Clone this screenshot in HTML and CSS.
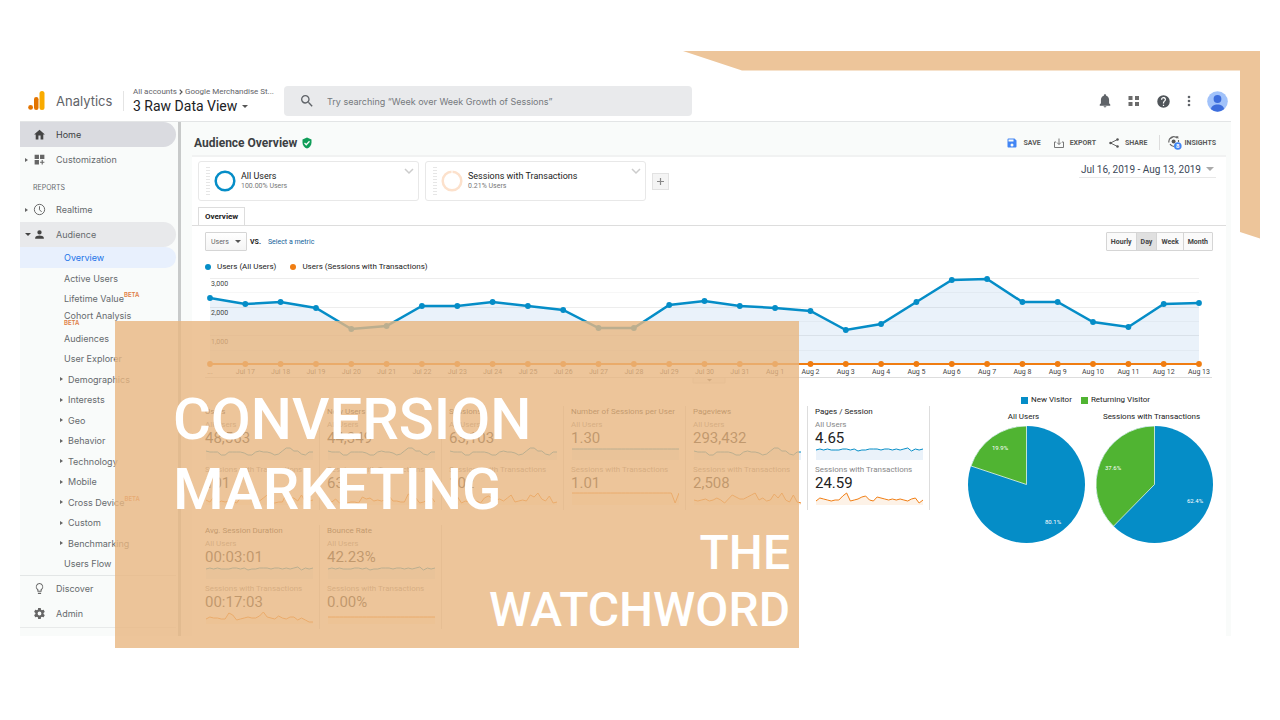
FILE: index.html
```html
<!DOCTYPE html>
<html lang="en">
<head>
<meta charset="utf-8">
<title>Conversion Marketing the Watchword</title>
<link rel="stylesheet" href="styles.css">
</head>
<body>
<div class="stage">
  <div class="dash">
    <header class="top">
      <div class="brand">
        <svg width="18" height="20" viewBox="0 0 18 20"><rect x="11.500" y="0" width="5" height="19" rx="2.500" fill="#f9ab00"/><rect x="6" y="6" width="4.500" height="13" rx="2.200" fill="#e37400"/><circle cx="2.600" cy="16.400" r="2.400" fill="#e37400"/></svg>
        <span>Analytics</span>
      </div>
      <div class="account">
        <div class="crumbs">All accounts <svg width="4" height="6" viewBox="0 0 4 6"><path d="M.7.7 3 3 .7 5.300" fill="none" stroke="#555" stroke-width="1.200"/></svg> Google Merchandise St...</div>
        <div class="view">3 Raw Data View <i class="caret"></i></div>
      </div>
      <label class="search">
        <svg width="16" height="16" viewBox="0 0 24 24" fill="#5f6368"><path d="M15.500 14h-.79l-.28-.27A6.470 6.470 0 0 0 16 9.500 6.500 6.500 0 1 0 9.500 16c1.610 0 3.090-.59 4.230-1.570l.27.28v.79l5 4.990L20.490 19l-4.990-5zm-6 0C7.010 14 5 11.990 5 9.500S7.010 5 9.500 5 14 7.010 14 9.500 11.990 14 9.500 14z"/></svg>
        <input type="text" aria-label="Search" placeholder="Try searching “Week over Week Growth of Sessions”">
      </label>
      <div class="tools">
        <button aria-label="Notifications"><svg width="14" height="14" viewBox="0 0 24 24" fill="#5f6368"><path d="M12 23c1.400 0 2.400-.9 2.400-2H9.600c0 1.100 1 2 2.400 2zm7-7v-6c0-3.500-1.900-6.200-5-7V2c0-1-.9-1.700-2-1.700S10 1 10 2v1C6.900 3.800 5 6.500 5 10v6l-2 2v2h18v-2z"/></svg></button>
        <button aria-label="Apps"><svg width="12" height="12" viewBox="0 0 12 12" fill="#6b6b6b"><path d="M.5 1h4v4h-4zM7 1h4v4H7zM.5 7h4v4h-4zM7 7h4v4H7z"/></svg></button>
        <button aria-label="Help"><svg width="15" height="15" viewBox="0 0 24 24" fill="#50555a"><path d="M12 2a10 10 0 1 0 0 20 10 10 0 0 0 0-20zm1 17h-2v-2h2zm2.070-7.750-.9.920C13.450 12.900 13 13.500 13 15h-2v-.5c0-1.100.45-2.100 1.170-2.830l1.240-1.260A2 2 0 1 0 10 9H8a4 4 0 1 1 7.070 2.250z"/></svg></button>
        <button aria-label="More"><svg width="4" height="12" viewBox="0 0 4 12" fill="#5f6368"><circle cx="2" cy="2" r="1.300"/><circle cx="2" cy="6" r="1.300"/><circle cx="2" cy="10" r="1.300"/></svg></button>
        <button aria-label="Account"><svg width="21" height="21" viewBox="0 0 21 21"><circle cx="10.500" cy="10.500" r="10.300" fill="#a1c2fa"/><circle cx="10.500" cy="8" r="3.900" fill="#3d6ddc"/><path d="M4 18.300c0-3 3-4.900 6.500-4.900s6.500 1.900 6.500 4.900a10 10 0 0 1-13 0z" fill="#3d6ddc"/></svg></button>
      </div>
    </header>

    <div class="body">
      <nav class="side">
        <a class="row home" href="#"><i></i><svg class="ico" viewBox="0 0 24 24"><path d="M10 21v-7h4v7h5v-9h3L12 3 2 12h3v9z"/></svg>Home</a>
        <a class="row" href="#"><i class="tri"></i><svg class="ico" viewBox="0 0 24 24"><path d="M3 3h8v8H3zM13 3h8v8h-8zM3 13h8v8H3zM16 13h2v3h3v2h-3v3h-2v-3h-3v-2h3z"/></svg>Customization</a>
        <div class="group">REPORTS</div>
        <a class="row" href="#"><i class="tri"></i><svg class="ico" viewBox="0 0 24 24"><circle cx="12" cy="12" r="9.500" fill="none" stroke="#666" stroke-width="1.800"/><path d="M12 6v6.500l4 4" fill="none" stroke="#666" stroke-width="1.800"/></svg>Realtime</a>
        <a class="row open" href="#"><i class="tri down"></i><svg class="ico" viewBox="0 0 24 24"><path d="M12 12a4 4 0 1 0 0-8 4 4 0 0 0 0 8zm0 2c-3 0-8 1.300-8 4v2h16v-2c0-2.700-5-4-8-4z"/></svg>Audience</a>
        <div class="sub first">
          <a class="on" href="#">Overview</a>
          <a href="#">Active Users</a>
          <a href="#">Lifetime Value<sup>BETA</sup></a>
          <a class="stack" href="#">Cohort Analysis<small>BETA</small></a>
        </div>
        <div class="sub rest">
          <a href="#">Audiences</a>
          <a href="#">User Explorer</a>
          <a href="#"><i class="tri"></i>Demographics</a>
          <a href="#"><i class="tri"></i>Interests</a>
          <a href="#"><i class="tri"></i>Geo</a>
          <a href="#"><i class="tri"></i>Behavior</a>
          <a href="#"><i class="tri"></i>Technology</a>
          <a href="#"><i class="tri"></i>Mobile</a>
          <a href="#"><i class="tri"></i>Cross Device<sup>BETA</sup></a>
          <a href="#"><i class="tri"></i>Custom</a>
          <a href="#"><i class="tri"></i>Benchmarking</a>
          <a href="#">Users Flow</a>
        </div>
        <div class="foot">
          <a class="row" href="#"><i></i><svg class="ico" viewBox="0 0 24 24"><path d="M9 21c0 .6.4 1 1 1h4c.6 0 1-.4 1-1v-1H9zm3-19a7 7 0 0 0-4 12.700V17c0 .6.4 1 1 1h6c.6 0 1-.4 1-1v-2.300A7 7 0 0 0 12 2zm2.800 11.100-.8.600V16h-4v-2.300l-.8-.6a5 5 0 1 1 5.600 0z"/></svg>Discover</a>
          <a class="row" href="#"><i></i><svg class="ico" viewBox="0 0 24 24"><path d="M19.400 13c.1-.6.1-1.300 0-2l2.100-1.600c.2-.1.200-.4.100-.6l-2-3.500c-.1-.2-.4-.3-.6-.2l-2.500 1a7 7 0 0 0-1.700-1l-.4-2.600c0-.3-.2-.5-.5-.5h-4c-.3 0-.5.200-.5.500L9 5.100a7 7 0 0 0-1.700 1l-2.500-1c-.2-.1-.5 0-.6.200l-2 3.500c-.1.200 0 .5.100.6L4.500 11a8 8 0 0 0 0 2l-2.200 1.600c-.1.100-.2.400-.1.600l2 3.500c.1.200.4.300.6.200l2.500-1a7 7 0 0 0 1.700 1l.4 2.600c0 .3.300.5.500.5h4c.3 0 .5-.2.500-.5l.4-2.600a7 7 0 0 0 1.700-1l2.500 1c.2.100.5 0 .6-.2l2-3.500c.1-.2.100-.5-.1-.6zM12 15.500a3.500 3.500 0 1 1 0-7 3.500 3.500 0 0 1 0 7z"/></svg>Admin</a>
        </div>
      </nav>

      <main class="main">
        <div class="titlebar">
          <h1>Audience Overview</h1>
          <svg width="12" height="12" viewBox="0 0 24 24"><path d="M12 1 3 5v6c0 5.500 3.800 10.700 9 12 5.200-1.300 9-6.500 9-12V5z" fill="#0f9d58"/><path d="m7 12 3.500 3.500L17 8.500" fill="none" stroke="#fff" stroke-width="2.500"/></svg>
          <div class="actions">
            <button><svg width="12" height="12" viewBox="0 0 24 24" fill="#4285f4"><path d="M17 3H5a2 2 0 0 0-2 2v14c0 1.100.9 2 2 2h14a2 2 0 0 0 2-2V7zm-5 16a3 3 0 1 1 0-6 3 3 0 0 1 0 6zm3-10H5V5h10z"/></svg>SAVE</button>
            <button><svg width="12" height="12" viewBox="0 0 24 24" fill="none" stroke="#777" stroke-width="2"><path d="M6 10H3v11h18V10h-3M12 3v12M8 11l4 4 4-4"/></svg>EXPORT</button>
            <button><svg width="12" height="12" viewBox="0 0 24 24" fill="#555"><path d="M19 5 5 12l14 7" fill="none" stroke="#555" stroke-width="1.800"/><circle cx="19" cy="5" r="2.500"/><circle cx="5" cy="12" r="2.500"/><circle cx="19" cy="19" r="2.500"/></svg>SHARE</button>
            <button class="insights"><svg width="14" height="15" viewBox="0 0 14 15"><path d="M1 7.500A4.800 4.800 0 0 1 9 3M10.500 5v2M1.500 4 5 2M2 9a4.800 4.800 0 0 0 4 2.500" fill="none" stroke="#666" stroke-width="1.200"/><path d="M7.500 1.200h2.800V4z" fill="#666"/><circle cx="5.600" cy="6.500" r="2" fill="#555"/><circle cx="9.800" cy="11" r="3.800" fill="#4285f4"/><text x="9.800" y="13.200" font-size="6" font-weight="700" text-anchor="middle" fill="#fff">8</text></svg>INSIGHTS</button>
          </div>
        </div>

        <div class="panel">
          <div class="segments">
            <div class="seg"><i class="grip"></i><svg width="22" height="22" viewBox="0 0 22 22"><circle cx="11" cy="11" r="9.300" fill="none" stroke="#058dc7" stroke-width="2.500"/></svg><div><b>All Users</b><span>100.00% Users</span></div><svg class="chev" width="10" height="7" viewBox="0 0 10 7"><path d="m1 1 4 4 4-4" fill="none" stroke="#ccc" stroke-width="1.500"/></svg></div>
            <div class="seg"><i class="grip"></i><svg width="22" height="22" viewBox="0 0 22 22"><circle cx="11" cy="11" r="9.300" fill="none" stroke="#fce1cc" stroke-width="2.500"/><path d="M11 0v4" stroke="#fff"/></svg><div><b>Sessions with Transactions</b><span>0.21% Users</span></div><svg class="chev" width="10" height="7" viewBox="0 0 10 7"><path d="m1 1 4 4 4-4" fill="none" stroke="#ccc" stroke-width="1.500"/></svg></div>
            <button class="plus" aria-label="Add segment"><svg width="7" height="7" viewBox="0 0 7 7"><path d="M3.500 0v7M0 3.500h7" stroke="#888" stroke-width="1.200"/></svg></button>
            <button class="dates">Jul 16, 2019 - Aug 13, 2019 <i class="caret"></i></button>
          </div>
          <div class="tabs"><button>Overview</button></div>
          <div class="controls">
            <span class="pick"><select aria-label="Metric"><option>Users</option></select></span>
            <b>VS.</b>
            <a href="#">Select a metric</a>
            <div class="gran"><button>Hourly</button><button class="on">Day</button><button>Week</button><button>Month</button></div>
          </div>
          <div class="legend"><i class="dot"></i>Users (All Users)<i class="dot or"></i>Users (Sessions with Transactions)</div>
          <svg class="chart" id="chart" viewBox="0 0 1008 110"></svg>
          <div class="lower">
            <div class="metrics" id="metrics"></div>
            <section class="pies">
              <div class="keys"><i></i>New Visitor<i class="gr"></i>Returning Visitor</div>
              <figure><figcaption>All Users</figcaption>
                <svg viewBox="0 0 117 117"><circle cx="58.500" cy="58.500" r="58.500" fill="#058dc7"/><path d="M58.500 58.500V0A58.500 58.500 0 0 0 3 40z" fill="#50b432" stroke="#fff" stroke-width=".7"/><text x="32" y="24">19.9%</text><text x="85" y="98">80.1%</text></svg></figure>
              <figure><figcaption>Sessions with Transactions</figcaption>
                <svg viewBox="0 0 117 117"><circle cx="58.500" cy="58.500" r="58.500" fill="#058dc7"/><path d="M58.500 58.500V0A58.500 58.500 0 0 0 17.500 100.200z" fill="#50b432" stroke="#fff" stroke-width=".7"/><text x="17" y="44">37.6%</text><text x="99" y="77">62.4%</text></svg></figure>
            </section>
          </div>
        </div>
      </main>
    </div>
  </div>

  <svg class="frame" width="577" height="188" viewBox="0 0 577 188"><path d="M0 0h577v187.500l-20-6.500V19.500H59z" fill="#edc59a"/></svg>
  <div class="banner">
    <p class="big">CONVERSION<br>MARKETING</p>
    <p class="small">THE<br>WATCHWORD</p>
  </div>
</div>
<script src="main.js"></script>
</body>
</html>
```
FILE: styles.css
```css
* { box-sizing: border-box; }
body { margin: 0; background: #fff; font-family: Roboto, "Liberation Sans", sans-serif; font-size: 9px; color: #222; }
button { font: inherit; color: inherit; border: 0; padding: 0; background: none; display: inline-flex; align-items: center; }
a { color: inherit; text-decoration: none; }
svg { display: block; flex: none; }
.stage { position: relative; padding: 82px 49px 72px 20px; }

.top { display: flex; align-items: center; height: 40px; padding-bottom: 1px; border-bottom: 1px solid #e3e5e6; font-family: Inter, Roboto, sans-serif; }
.brand { display: flex; align-items: center; gap: 10px; width: 104px; height: 20px; padding-left: 8px; border-right: 1px solid #e4e4e4; font-size: 13px; color: #5f6368; }
.account { width: 160px; padding-left: 9px; }
.crumbs { display: flex; align-items: center; gap: 2px; font-family: Roboto, sans-serif; font-size: 8px; line-height: 10px; color: #5f6368; white-space: nowrap; }
.view { display: flex; align-items: center; gap: 5px; font-family: Roboto, sans-serif; font-size: 14px; line-height: 18px; color: #202124; }
.caret { border: 3px solid transparent; border-top-color: #555; border-bottom: 0; }
.search { display: flex; align-items: center; gap: 12px; width: 408px; height: 30px; padding-left: 15px; background: #e9eaec; border-radius: 4px; }
.search input { flex: 1; border: 0; padding: 0; background: none; font: 9px Inter, sans-serif; }
.search input::placeholder { color: #75797d; opacity: 1; }
.tools { display: flex; align-items: center; gap: 16px; margin-left: auto; padding-right: 3px; }

.body { display: flex; background: #f9fbfa; }
.side { width: 161px; padding-right: 2px; border-right: 3px solid #c8caca; font-family: Inter, Roboto, sans-serif; color: #666a6d; }
.row { display: flex; align-items: center; height: 25px; padding-left: 5px; border-radius: 0 13px 13px 0; }
.row > i { width: 8px; }
.ico { width: 13px; height: 13px; margin: 0 10px 0 0; fill: #666; }
.home { background: #dadbe0; color: #3c4043; }
.home .ico, .open .ico { fill: #444; }
.open { background: #e8e9eb; }
.tri::before { content: ""; display: block; width: 0; border: 2px solid transparent; border-left: 3px solid #666; border-right: 0; }
.tri.down::before { border: 3px solid transparent; border-top-color: #444; border-bottom: 0; }
.group { padding: 10px 0 4px 13px; font-size: 7px; line-height: 11px; }
.sub { display: flex; flex-direction: column; }
.sub a { display: flex; align-items: center; flex: 1; padding-left: 44px; }
.sub .tri { width: 8px; margin-left: -4px; }
.sub sup, .sub small { font-size: 6px; line-height: 7px; font-weight: 600; color: #e07b44; }
.sub sup { align-self: flex-start; margin-top: 3px; }
.first a { flex: none; height: 20px; }
.first .on { height: 21px; background: #e8f0fd; color: #1a73e8; border-radius: 0 11px 11px 0; }
.first .stack { display: block; line-height: 11px; padding-top: 2px; }
.stack small { display: block; margin-top: -2px; }
.rest { min-height: 246px; }
.foot { margin: 1px 0 8px; border-top: 1px solid #e3e6e6; border-bottom: 1px solid #e8eaea; padding-bottom: 1px; }

.main { flex: 1; min-width: 0; padding: 0 5px 0 11px; }
.titlebar { display: flex; align-items: center; gap: 4px; height: 33px; padding: 8px 10px 0 2px; }
h1 { margin: 0; font-size: 12px; font-weight: 700; color: #3c4043; }
.actions { display: flex; gap: 12px; margin-left: auto; font-size: 7px; font-weight: 700; color: #5b5b5b; }
.actions button { gap: 5px; }
.insights { border-left: 1px solid #ddd; padding-left: 8px; }
.insights svg { margin-right: -3px; }
.panel { background: #fff; border-top: 2px solid #f1f2f2; min-height: 481px; }
.segments { display: flex; gap: 6px; padding: 4px 10px 0 6px; }
.seg { display: flex; align-items: center; width: 221px; height: 40px; padding: 0 4px 0 7px; border: 1px solid #e8e8e8; border-radius: 3px; }
.grip { width: 4px; height: 28px; margin-right: 4px; background: repeating-linear-gradient(#e6e6e6 0 1px, #fff 1px 3px); }
.seg div { margin-left: 5px; }
.seg b, .seg span { display: block; line-height: 10px; }
.seg b { font-weight: 400; font-size: 9px; }
.seg span { font-size: 7px; color: #777; }
.chev { align-self: flex-start; margin: 6px 0 0 auto; }
.plus { align-self: center; justify-content: center; width: 17px; height: 17px; background: #f4f4f4; border: 1px solid #e2e2e2; }
.dates { align-self: flex-start; gap: 5px; height: 17px; margin-left: auto; padding: 0 2px; border-bottom: 1px solid #e8e8e8; font-size: 10px; color: #3c4858; }
.dates .caret { border-width: 4px 4px 0; border-top-color: #aaa; }
.tabs { display: flex; height: 25px; padding: 6px 0 0 6px; border-bottom: 1px solid #ddd; }
.tabs button { height: 18px; padding: 0 6px; background: #fff; border: 1px solid #ddd; border-bottom: 0; font-size: 8px; font-weight: 700; }
.controls { display: flex; align-items: center; padding: 6px 13px 0; font-size: 7px; }
.controls > b { margin: 0 7px 0 3px; }
.controls > a { color: #15649b; }
.pick { position: relative; }
.pick::after { content: ""; position: absolute; right: 6px; top: 8px; border: 3px solid transparent; border-top-color: #555; border-bottom: 0; }
select { appearance: none; width: 42px; height: 19px; padding: 0 5px; border: 1px solid #d5d5d5; border-radius: 1px; background: linear-gradient(#fff, #f5f5f5); font: 7px Roboto, sans-serif; color: #666; }
.gran { display: flex; height: 19px; margin-left: auto; border: 1px solid #d5d5d5; border-radius: 1px; background: #fafafa; font-weight: 700; color: #444; }
.gran button { padding: 0 4px; }
.gran button + button { border-left: 1px solid #d5d5d5; }
.gran .on { background: #e0e0e0; }
.legend { display: flex; align-items: center; padding: 10px 13px 0; font-size: 8px; line-height: 12px; }
.dot { width: 6px; height: 6px; margin-right: 6px; border-radius: 3px; background: #058dc7; }
.dot.or { margin-left: 14px; background: #f07d12; }
.chart { width: auto; margin: 2px 13px 0; font-size: 7px; fill: #444; }
.lower { display: flex; padding: 21px 13px 0 6px; }
.metrics { display: grid; flex: 1; min-width: 0; grid-template-columns: repeat(6, minmax(0, 1fr)); row-gap: 15px; align-content: start; }
.metric { padding: 0 6px 2px 7px; border-right: 1px solid #ddd; white-space: nowrap; }
.metric h2 { margin: 0; font-size: 8px; line-height: 12px; font-weight: 400; }
.metric p { margin: 0; font-size: 8px; line-height: 13px; color: #888; }
.metric strong { display: block; font-size: 15px; line-height: 14px; font-weight: 400; }
.metric svg { width: 100%; height: 18px; padding: 2px 0 2px 1px; }
.pies { display: grid; grid-template-columns: 117px 117px; gap: 0 11px; flex: none; width: 283px; padding-left: 38px; align-content: start; margin-top: -13px; font-size: 8px; text-align: center; }
.keys { grid-column: 1 / 3; display: flex; align-items: center; justify-content: center; line-height: 14px; margin-right: 10px; }
.keys i { width: 7px; height: 7px; margin-right: 3px; background: #058dc7; }
.keys .gr { margin-left: 9px; background: #50b432; }
figure { margin: 0; }
figcaption { line-height: 19px; white-space: nowrap; }
figure + figure figcaption { padding-right: 6px; }
figure:nth-of-type(1) figcaption { padding-right: 6px; }
figure svg { width: 100%; }
figure text { font-size: 6px; fill: #fff; text-anchor: middle; }

.frame { position: absolute; top: 51px; right: 20px; }
.banner { position: absolute; left: 115px; top: 321px; width: 684px; padding: 63px 9px 10px 58px; background: rgba(232, 182, 129, .8); color: #fff; font-weight: 500; }
.banner p { margin: 0; }
.big { font-size: 58px; line-height: 70px; }
.small { font-size: 48px; line-height: 57px; text-align: right; }
```
FILE: main.js
```js
const BLUE = '#058dc7', ORANGE = '#f07d12', FILL = '#2f7fd0';

// Daily users, Jul 16 to Aug 13, as heights over the baseline.
const users = [66, 60, 62, 56, 35, 38, 58, 58, 62, 58, 54, 36, 36, 59, 63, 58, 56, 53, 34, 40, 62, 84, 85, 62, 62, 42, 37, 60, 61];
const base = 89, x0 = 5, step = 989 / 28;
const px = i => (x0 + i * step).toFixed(1);
let out = '';
[3, 17, 32, 46, 60, 75].forEach((y, i) => { out += `<path d="M5 ${y}.5H994" stroke="${i % 2 ? '#f7f7f7' : '#ededed'}"/>`; });
const line = users.map((v, i) => `${px(i)},${base - v}`).join(' ');
out += `<polygon points="5,${base} ${line} 994,${base}" fill="${FILL}" fill-opacity=".1"/>`;
out += `<polyline points="${line}" fill="none" stroke="${BLUE}" stroke-width="2.5"/>`;
out += `<path d="M5 ${base}H994" stroke="${ORANGE}" stroke-width="2"/>`;
users.forEach((v, i) => {
  const label = i === 0 ? '...' : i < 16 ? `Jul ${16 + i}` : `Aug ${i - 15}`;
  out += `<circle cx="${px(i)}" cy="${base - v}" r="2.9" fill="${BLUE}"/><circle cx="${px(i)}" cy="${base}" r="2.9" fill="${ORANGE}"/>`;
  out += `<text x="${px(i)}" y="99" text-anchor="middle">${label}</text>`;
});
['3,000', '2,000', '1,000'].forEach((t, i) => { out += `<text x="6" y="${11 + i * 29}">${t}</text>`; });
out += '<path d="M0 102.500H1007" stroke="#ddd"/><path d="M488 103v5h32v-5" fill="#f5f5f5" stroke="#ddd"/><path d="M502 104h5l-2.500 2.500z" fill="#777"/>';
document.getElementById('chart').innerHTML = out;

const wave = [8, 7, 7, 7, 4, 4, 7, 7, 7, 7, 6, 4, 4, 7, 8, 7, 7, 6, 4, 5, 8, 11, 11, 8, 8, 5, 4, 7, 7];
const jag = [4, 2, 7, 1, 3, 2, 3, 3, 1, 6, 8, 6, 4, 5, 3, 6, 9, 2, 1, 2, 2, 10, 6, 6, 3, 9, 2, 3, 4];
const flat = [9, 10, 9, 10, 9, 9, 9, 10, 10, 9, 10, 8, 9, 9, 10, 10, 10, 9, 10, 10, 9, 10, 9, 10, 11, 8, 10, 9, 10];
const even = Array(29).fill(10);
const metrics = [
  ['Users', '48,563', wave, '101', jag],
  ['New Users', '44,349', wave, '63', [4, 2, 5, 1, 3, 1, 2, 2, 1, 7, 5, 6, 3, 4, 3, 4, 8, 3, 3, 2, 2, 10, 7, 6, 1, 2, 4, 7, 2]],
  ['Sessions', '63,103', wave, '102', [4, 2, 7, 1, 3, 2, 3, 3, 1, 6, 8, 6, 4, 5, 3, 6, 9, 2, 3, 4, 3, 9, 7, 11, 5, 3, 8, 1, 2]],
  ['Number of Sessions per User', '1.30', even, '1.01', [...Array(27).fill(11), 1, 11]],
  ['Pageviews', '293,432', wave, '2,508', [4, 3, 4, 5, 3, 4, 6, 4, 1, 5, 9, 7, 5, 5, 7, 9, 11, 4, 6, 3, 4, 10, 6, 11, 4, 2, 9, 2, 1]],
  ['Pages / Session', '4.65', flat, '24.59', [3, 6, 5, 4, 3, 4, 4, 8, 11, 3, 4, 5, 7, 8, 4, 3, 7, 6, 5, 4, 5, 4, 5, 4, 3, 5, 6, 1, 4]],
  ['Avg. Session Duration', '00:03:01', flat, '00:17:03', [4, 6, 5, 5, 4, 4, 10, 8, 3, 4, 5, 6, 5, 5, 7, 11, 6, 5, 4, 7, 5, 4, 6, 6, 3, 5, 3, 1, 1]],
  ['Bounce Rate', '42.23%', flat, '0.00%', Array(29).fill(6)]
];
const spark = (data, color, fill) => {
  const pts = data.map((v, i) => `${(i * 108 / 28).toFixed(1)},${12 - v}`).join(' ');
  return `<svg viewBox="0 0 108 14" preserveAspectRatio="none"><polygon points="0,13 ${pts} 108,13" fill="${fill}" fill-opacity=".1"/><polyline points="${pts}" fill="none" stroke="${color}"/></svg>`;
};
document.getElementById('metrics').innerHTML = metrics.map(([name, a, sa, b, sb]) =>
  `<div class="metric"><h2>${name}</h2><p>All Users</p><strong>${a}</strong>${spark(sa, BLUE, FILL)}<p>Sessions with Transactions</p><strong>${b}</strong>${spark(sb, ORANGE, ORANGE)}</div>`).join('');
```
